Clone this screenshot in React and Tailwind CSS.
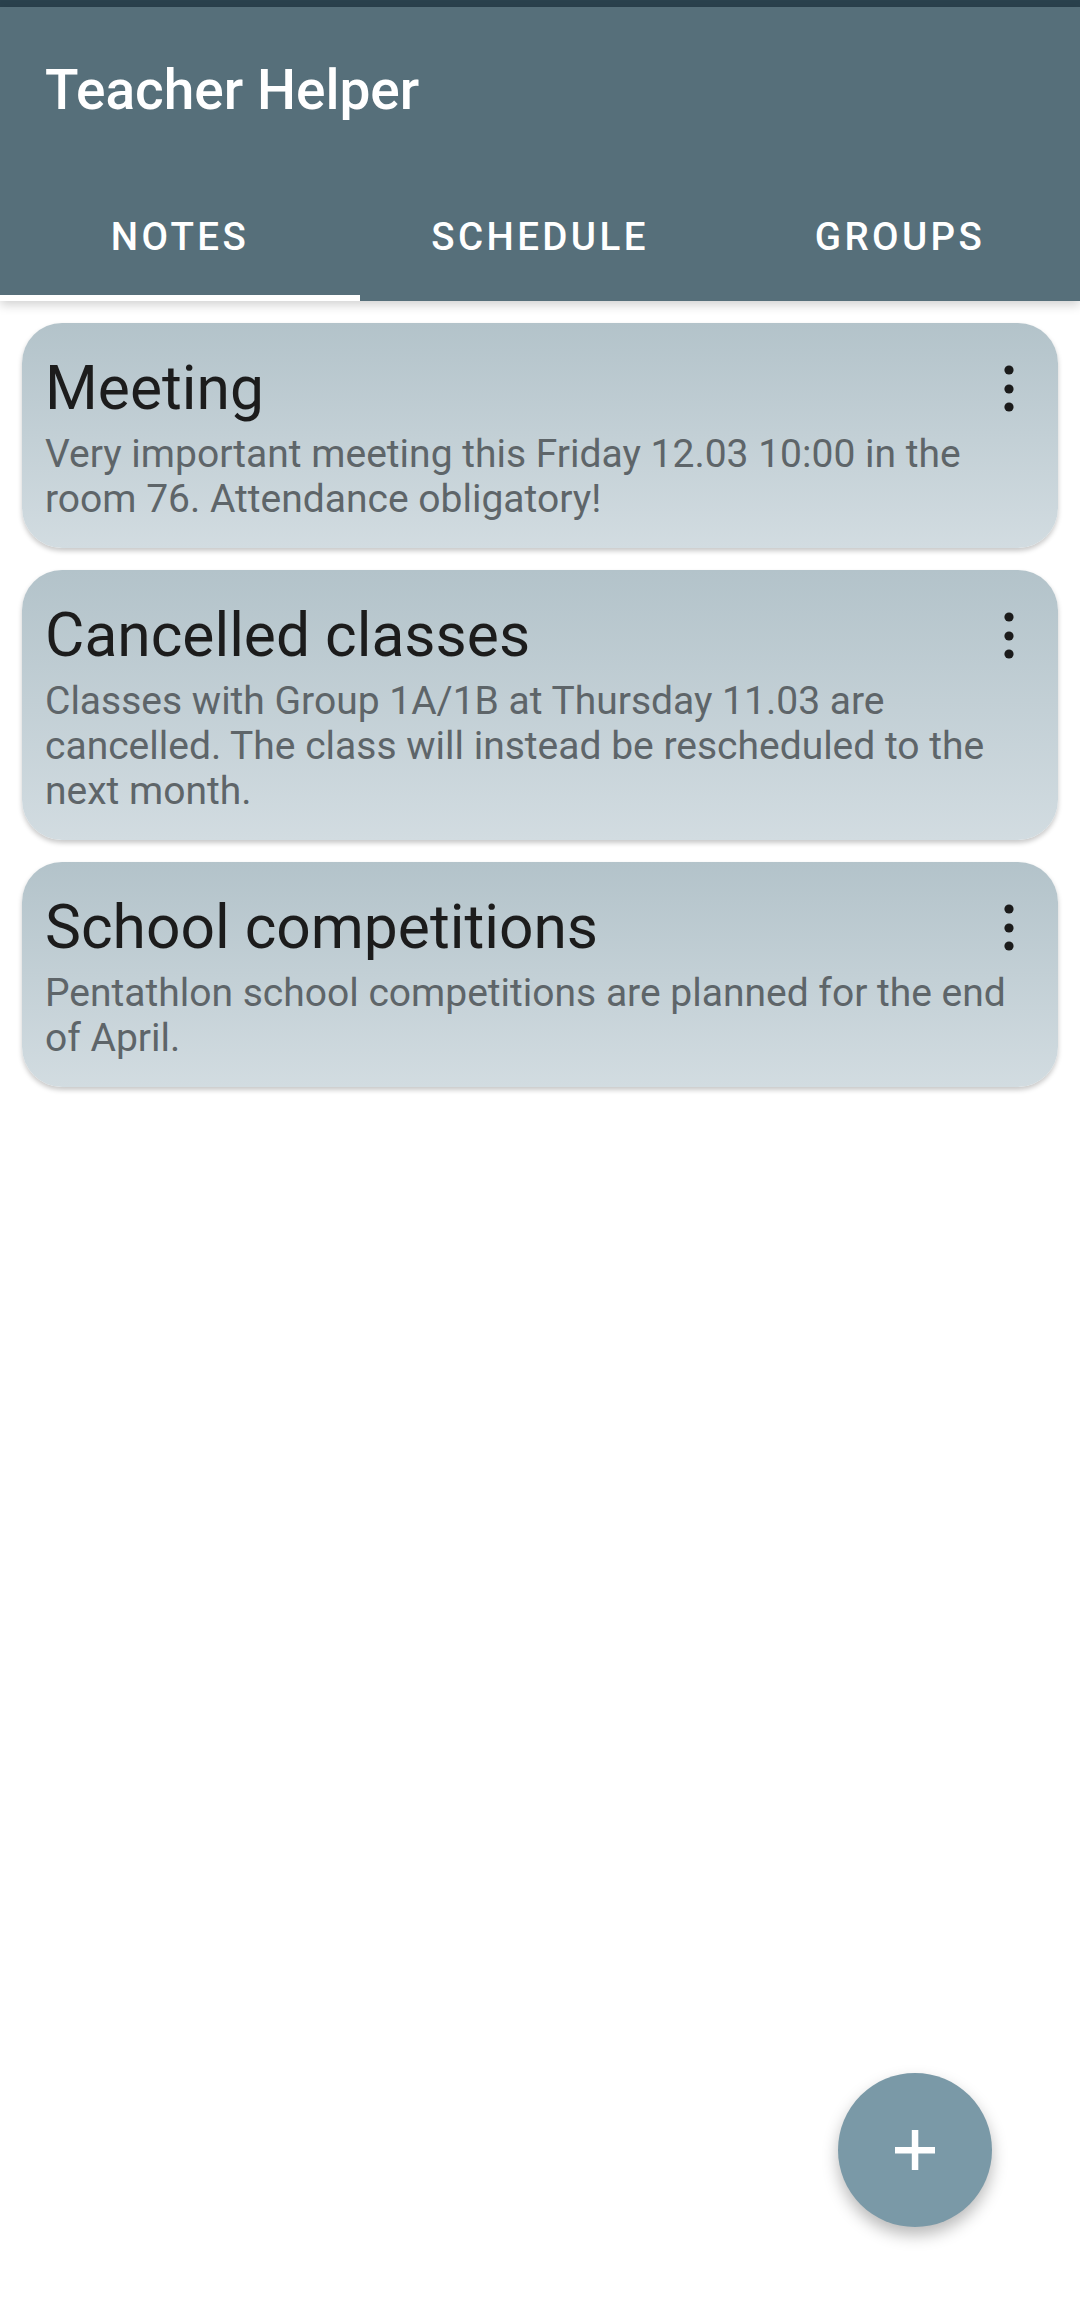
import React, { useState } from "react";

const notes = [
  {
    title: "Meeting",
    body: "Very important meeting this Friday 12.03 10:00 in the room 76. Attendance obligatory!",
  },
  {
    title: "Cancelled classes",
    body: "Classes with Group 1A/1B at Thursday 11.03 are cancelled. The class will instead be rescheduled to the next month.",
  },
  {
    title: "School competitions",
    body: "Pentathlon school competitions are planned for the end of April.",
  },
];

const tabs = ["NOTES", "SCHEDULE", "GROUPS"];

function MoreIcon() {
  return (
    <svg width="20" height="56" viewBox="0 0 20 56" className="block">
      <circle cx="10" cy="9" r="4.6" fill="#1b1b1b" />
      <circle cx="10" cy="28" r="4.6" fill="#1b1b1b" />
      <circle cx="10" cy="46" r="4.6" fill="#1b1b1b" />
    </svg>
  );
}

function NoteCard({ note }) {
  return (
    <div className="rounded-[40px] bg-gradient-to-b from-[#b3c3ca] to-[#d2dce1] shadow-[0_3px_5px_rgba(0,0,0,0.22)] pt-[31px] pb-[26px] pl-[23px] pr-[22px]">
      <div className="flex items-center justify-between">
        <h2 className="text-[60.5px] leading-[70px] text-[#1c1c1c] font-normal">{note.title}</h2>
        <div className="mr-[17px]">
          <MoreIcon />
        </div>
      </div>
      <p className="mt-[8px] text-[39px] leading-[45px] text-[#5e6569]">{note.body}</p>
    </div>
  );
}

export default function App() {
  const [activeTab, setActiveTab] = useState(0);

  return (
    <div
      className="relative min-h-[2316px] w-[1080px] bg-white overflow-hidden"
      style={{ fontFamily: "Roboto, 'Noto Sans', sans-serif" }}
    >
      {/* status bar + app bar */}
      <div className="h-[7px] bg-[#2a414d]" />
      <div className="bg-[#566f7a] shadow-[0_4px_10px_rgba(0,0,0,0.18)] relative z-10">
        <div className="h-[166px] flex items-center pl-[45px]">
          <h1 className="text-[55px] font-medium text-white">Teacher Helper</h1>
        </div>
        <div className="grid grid-cols-3 h-[128px]">
          {tabs.map((tab, i) => (
            <button
              key={tab}
              onClick={() => setActiveTab(i)}
              className="relative flex items-center justify-center text-[38.5px] font-medium tracking-[3.4px] text-white"
            >
              {tab}
              {activeTab === i && (
                <span className="absolute left-0 right-0 bottom-0 h-[6px] bg-white" />
              )}
            </button>
          ))}
        </div>
      </div>

      {/* notes list */}
      <div className="flex flex-col gap-[22px] px-[22px] pt-[22px]">
        {notes.map((note) => (
          <NoteCard key={note.title} note={note} />
        ))}
      </div>

      {/* floating add button */}
      <button className="absolute right-[88px] bottom-[89px] w-[154px] h-[154px] rounded-full bg-[#7a99a7] flex items-center justify-center shadow-[0_8px_16px_rgba(0,0,0,0.28)]">
        <svg width="40" height="40" viewBox="0 0 40 40">
          <rect x="0" y="17" width="40" height="6.5" fill="#fff" />
          <rect x="16.8" y="0" width="6.5" height="40" fill="#fff" />
        </svg>
      </button>
    </div>
  );
}
